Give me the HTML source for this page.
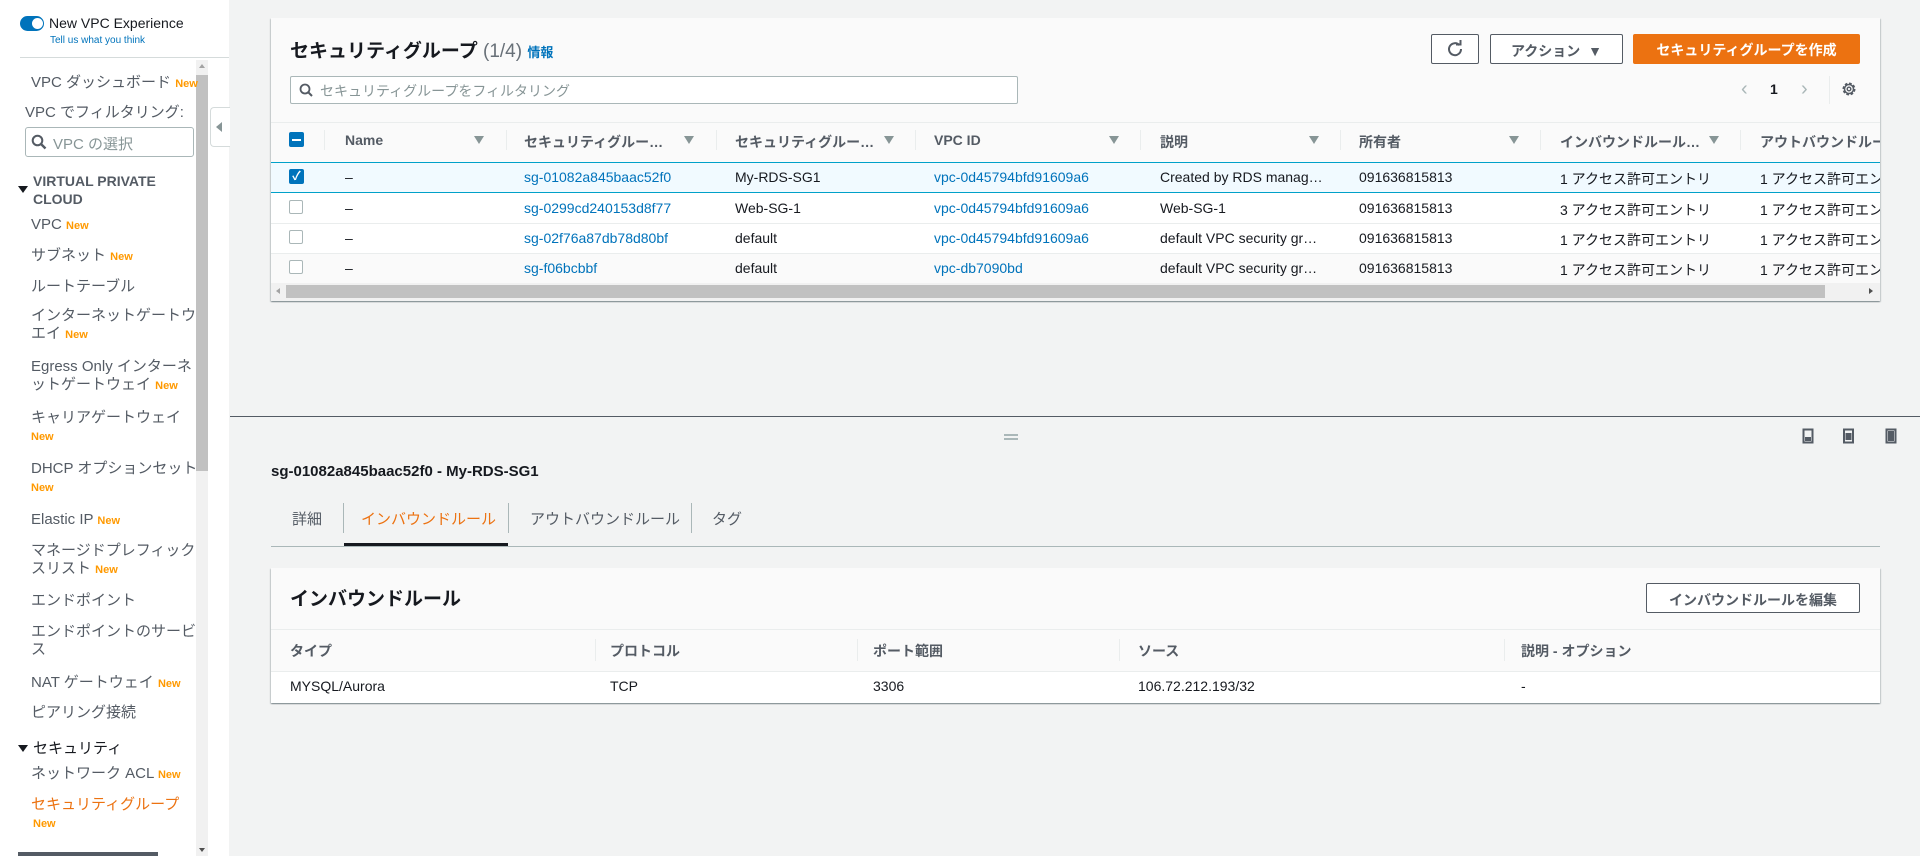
<!DOCTYPE html>
<html><head><meta charset="utf-8"><style>
*{margin:0;padding:0;box-sizing:border-box}
body{width:1920px;height:856px;overflow:hidden;background:#f2f3f3;font-family:"Liberation Sans","Noto Sans CJK JP",sans-serif;position:relative;color:#16191f}
.a{position:absolute;white-space:nowrap}
.sb{position:absolute;left:0;top:0;width:229px;height:856px;background:#fff}
.si{position:absolute;left:31px;font-size:15px;color:#545b64;white-space:nowrap;line-height:18px}
.n{color:#ff9900;font-weight:bold;font-size:11px}
.hd{position:absolute;left:31px;font-size:14px;font-weight:bold;color:#545b64;line-height:18px}
.panel{position:absolute;background:#fafafa;box-shadow:0 1px 1px rgba(0,28,36,.3),1px 1px 1px rgba(0,28,36,.15),-1px 1px 1px rgba(0,28,36,.15)}
.th{font-size:14px;font-weight:bold;color:#545b64}
.td{font-size:14px;color:#16191f}
.lk{color:#0073bb}
.vd{position:absolute;width:1px;background:#eaeded}
.fi{position:absolute;width:0;height:0;border-left:5px solid transparent;border-right:5px solid transparent;border-top:8px solid #879596}
.cb{position:absolute;width:14px;height:14px;border:1px solid #aab7b8;border-radius:2px;background:#fff}
.tab{position:absolute;top:508px;font-size:15px;color:#545b64;white-space:nowrap}
</style></head><body>
<div class="sb">
 <div class="a" style="left:20px;top:16px;width:24px;height:15px;border-radius:8px;background:#0073bb"></div>
 <div class="a" style="left:32px;top:18px;width:11px;height:11px;border-radius:50%;background:#fff"></div>
 <div class="a" style="left:49px;top:15px;font-size:14px;color:#16191f">New VPC Experience</div>
 <div class="a" style="left:50px;top:35px;font-size:10px;color:#0073bb">Tell us what you think</div>
 <div class="a" style="left:20px;top:57px;width:209px;height:1px;background:#d5dbdb"></div>
 <div class="a" style="left:196px;top:60px;width:12px;height:796px;background:#f1f1f1"></div>
 <div class="a" style="left:196px;top:75px;width:12px;height:396px;background:#c1c1c1"></div>
 <div class="a" style="left:199px;top:64px;border-left:3px solid transparent;border-right:3px solid transparent;border-bottom:4px solid #a3a3a3"></div>
 <div class="a" style="left:199px;top:848px;border-left:3px solid transparent;border-right:3px solid transparent;border-top:4px solid #505050"></div>
 <div class="si" style="top:74px">VPC ダッシュボード <span class="n">New</span></div>
 <div class="si" style="left:25px;top:104px">VPC でフィルタリング:</div>
 <div class="a" style="left:25px;top:127px;width:169px;height:30px;border:1px solid #aab7b8;border-radius:3px"></div>
 <svg class="a" style="left:31px;top:134px" width="16" height="16" viewBox="0 0 16 16"><circle cx="6.5" cy="6.5" r="4.8" fill="none" stroke="#545b64" stroke-width="2"/><path d="M10 10l4.5 4.5" stroke="#545b64" stroke-width="2.4"/></svg>
 <div class="a" style="left:53px;top:133px;font-size:15px;color:#879596">VPC の選択</div>
 <div class="a" style="left:18px;top:186px;border-left:5px solid transparent;border-right:5px solid transparent;border-top:7px solid #16191f"></div>
 <div class="hd" style="left:33px;top:172px">VIRTUAL PRIVATE<br>CLOUD</div>
 <div class="si" style="top:216px">VPC <span class="n">New</span></div>
 <div class="si" style="top:247px">サブネット <span class="n">New</span></div>
 <div class="si" style="top:278px">ルートテーブル</div>
 <div class="si" style="top:307px">インターネットゲートウ<br>エイ <span class="n">New</span></div>
 <div class="si" style="top:358px">Egress Only インターネ<br>ットゲートウェイ <span class="n">New</span></div>
 <div class="si" style="top:409px">キャリアゲートウェイ<br><span class="n">New</span></div>
 <div class="si" style="top:460px">DHCP オプションセット<br><span class="n">New</span></div>
 <div class="si" style="top:511px">Elastic IP <span class="n">New</span></div>
 <div class="si" style="top:542px">マネージドプレフィック<br>スリスト <span class="n">New</span></div>
 <div class="si" style="top:592px">エンドポイント</div>
 <div class="si" style="top:623px">エンドポイントのサービ<br>ス</div>
 <div class="si" style="top:674px">NAT ゲートウェイ <span class="n">New</span></div>
 <div class="si" style="top:704px">ピアリング接続</div>
 <div class="a" style="left:18px;top:745px;border-left:5px solid transparent;border-right:5px solid transparent;border-top:7px solid #16191f"></div>
 <div class="a" style="left:33px;top:737px;font-size:15px;color:#16191f">セキュリティ</div>
 <div class="si" style="top:765px">ネットワーク ACL <span class="n">New</span></div>
 <div class="si" style="top:796px;color:#ec7211">セキュリティグループ<br><span class="n" style="margin-left:2px">New</span></div>
 <div class="a" style="left:18px;top:852px;width:140px;height:4px;background:#545b64"></div>
</div>
<div class="a" style="left:210px;top:107px;width:20px;height:40px;background:#fff;border:1px solid #d5dbdb;border-right:none;border-radius:4px 0 0 4px"></div>
<div class="a" style="left:216px;top:122px;border-top:5px solid transparent;border-bottom:5px solid transparent;border-right:6px solid #879596"></div>

<div class="panel" style="left:271px;top:18px;width:1609px;height:283px;overflow:hidden">
 <div class="a" style="left:19px;top:18px;font-size:19px;font-weight:bold">セキュリティグループ <span style="font-weight:normal;color:#687078">(1/4)</span> <span style="font-size:13px;color:#0073bb;font-weight:bold">情報</span></div>
 <div class="a" style="left:1160px;top:16px;width:48px;height:30px;border:1px solid #545b64;border-radius:2px;background:#fff"></div>
 <svg class="a" style="left:1175px;top:22px" width="18" height="18" viewBox="0 0 18 18"><path d="M13.5 5.2A6 6 0 1 0 15 9" fill="none" stroke="#545b64" stroke-width="2"/><path d="M10 4.5h4.5V0" fill="none" stroke="#545b64" stroke-width="2"/></svg>
 <div class="a" style="left:1219px;top:16px;width:133px;height:30px;border:1px solid #545b64;border-radius:2px;background:#fff;font-size:14px;font-weight:bold;color:#545b64;padding:6px 0 0 20px">アクション&nbsp;&nbsp;▼</div>
 <div class="a" style="left:1362px;top:16px;width:227px;height:30px;border-radius:2px;background:#ec7211;font-size:14px;font-weight:bold;color:#fff;text-align:center;padding-top:6px">セキュリティグループを作成</div>
 <div class="a" style="left:19px;top:58px;width:728px;height:28px;border:1px solid #aab7b8;border-radius:2px;background:#fff"></div>
 <svg class="a" style="left:28px;top:65px" width="15" height="15" viewBox="0 0 15 15"><circle cx="6" cy="6" r="4.5" fill="none" stroke="#545b64" stroke-width="1.8"/><path d="M9.5 9.5L13 13" stroke="#545b64" stroke-width="2"/></svg>
 <div class="a" style="left:49px;top:63px;font-size:14px;color:#879596">セキュリティグループをフィルタリング</div>
 <div class="a" style="left:1470px;top:60px;font-size:20px;color:#aab7b8">‹</div>
 <div class="a" style="left:1499px;top:63px;font-size:14px;font-weight:bold;color:#16191f">1</div>
 <div class="a" style="left:1530px;top:60px;font-size:20px;color:#aab7b8">›</div>
 <div class="vd" style="left:1558px;top:58px;height:28px"></div>
 <svg class="a" style="left:1570px;top:63px" width="16" height="16" viewBox="0 0 16 16"><circle cx="8" cy="8" r="5.5" fill="none" stroke="#545b64" stroke-width="2" stroke-dasharray="2.6 1.7"/><circle cx="8" cy="8" r="4.5" fill="none" stroke="#545b64" stroke-width="1.5"/><circle cx="8" cy="8" r="1.8" fill="none" stroke="#545b64" stroke-width="1.4"/></svg>
 <div class="a" style="left:0;top:104px;width:1609px;height:1px;background:#eaeded"></div>
 <div class="a" style="left:18px;top:114px;width:15px;height:15px;background:#0073bb;border-radius:2px"></div>
 <div class="a" style="left:21px;top:121px;width:9px;height:2px;background:#fff"></div>
 <div class="vd" style="left:53px;top:112px;height:20px"></div>
 <div class="a th" style="left:74px;top:114px">Name</div><div class="fi" style="left:203px;top:118px"></div>
 <div class="vd" style="left:235px;top:112px;height:20px"></div>
 <div class="a th" style="left:253px;top:114px">セキュリティグルー…</div><div class="fi" style="left:413px;top:118px"></div>
 <div class="vd" style="left:445px;top:112px;height:20px"></div>
 <div class="a th" style="left:464px;top:114px">セキュリティグルー…</div><div class="fi" style="left:613px;top:118px"></div>
 <div class="vd" style="left:644px;top:112px;height:20px"></div>
 <div class="a th" style="left:663px;top:114px">VPC ID</div><div class="fi" style="left:838px;top:118px"></div>
 <div class="vd" style="left:869px;top:112px;height:20px"></div>
 <div class="a th" style="left:889px;top:114px">説明</div><div class="fi" style="left:1038px;top:118px"></div>
 <div class="vd" style="left:1069px;top:112px;height:20px"></div>
 <div class="a th" style="left:1088px;top:114px">所有者</div><div class="fi" style="left:1238px;top:118px"></div>
 <div class="vd" style="left:1269px;top:112px;height:20px"></div>
 <div class="a th" style="left:1289px;top:114px">インバウンドルール…</div><div class="fi" style="left:1438px;top:118px"></div>
 <div class="vd" style="left:1469px;top:112px;height:20px"></div>
 <div class="a th" style="left:1489px;top:114px">アウトバウンドルール</div>
 <div class="a" style="left:0;top:144px;width:1609px;height:31px;background:#f1faff;border-top:1px solid #00a1c9;border-bottom:1px solid #00a1c9"></div>
 <div class="a" style="left:0;top:205px;width:1609px;height:1px;background:#eaeded"></div>
 <div class="a" style="left:0;top:235px;width:1609px;height:1px;background:#eaeded"></div>
 <div class="a" style="left:0;top:175px;width:1609px;height:30px;background:#fff"></div>
 <div class="a" style="left:0;top:206px;width:1609px;height:29px;background:#fff"></div>
 <div class="a" style="left:18px;top:151px;width:15px;height:15px;background:#0073bb;border-radius:2px;color:#fff;font-size:12px;font-weight:bold;text-align:center;line-height:15px">✓</div>
 <div class="cb" style="left:18px;top:182px"></div>
 <div class="cb" style="left:18px;top:212px"></div>
 <div class="cb" style="left:18px;top:242px"></div>
 <div class="a td" style="left:74px;top:151px">–</div>
 <div class="a td lk" style="left:253px;top:151px">sg-01082a845baac52f0</div>
 <div class="a td" style="left:464px;top:151px">My-RDS-SG1</div>
 <div class="a td lk" style="left:663px;top:151px">vpc-0d45794bfd91609a6</div>
 <div class="a td" style="left:889px;top:151px">Created by RDS manag…</div>
 <div class="a td" style="left:1088px;top:151px">091636815813</div>
 <div class="a td" style="left:1289px;top:151px">1 アクセス許可エントリ</div>
 <div class="a td" style="left:1489px;top:151px">1 アクセス許可エン</div>
 <div class="a td" style="left:74px;top:182px">–</div>
 <div class="a td lk" style="left:253px;top:182px">sg-0299cd240153d8f77</div>
 <div class="a td" style="left:464px;top:182px">Web-SG-1</div>
 <div class="a td lk" style="left:663px;top:182px">vpc-0d45794bfd91609a6</div>
 <div class="a td" style="left:889px;top:182px">Web-SG-1</div>
 <div class="a td" style="left:1088px;top:182px">091636815813</div>
 <div class="a td" style="left:1289px;top:182px">3 アクセス許可エントリ</div>
 <div class="a td" style="left:1489px;top:182px">1 アクセス許可エン</div>
 <div class="a td" style="left:74px;top:212px">–</div>
 <div class="a td lk" style="left:253px;top:212px">sg-02f76a87db78d80bf</div>
 <div class="a td" style="left:464px;top:212px">default</div>
 <div class="a td lk" style="left:663px;top:212px">vpc-0d45794bfd91609a6</div>
 <div class="a td" style="left:889px;top:212px">default VPC security gr…</div>
 <div class="a td" style="left:1088px;top:212px">091636815813</div>
 <div class="a td" style="left:1289px;top:212px">1 アクセス許可エントリ</div>
 <div class="a td" style="left:1489px;top:212px">1 アクセス許可エン</div>
 <div class="a td" style="left:74px;top:242px">–</div>
 <div class="a td lk" style="left:253px;top:242px">sg-f06bcbbf</div>
 <div class="a td" style="left:464px;top:242px">default</div>
 <div class="a td lk" style="left:663px;top:242px">vpc-db7090bd</div>
 <div class="a td" style="left:889px;top:242px">default VPC security gr…</div>
 <div class="a td" style="left:1088px;top:242px">091636815813</div>
 <div class="a td" style="left:1289px;top:242px">1 アクセス許可エントリ</div>
 <div class="a td" style="left:1489px;top:242px">1 アクセス許可エン</div>
 <div class="a" style="left:0;top:265px;width:1609px;height:18px;background:#f1f1f1"></div>
 <div class="a" style="left:15px;top:267px;width:1539px;height:13px;background:#c1c1c1"></div>
 <div class="a" style="left:5px;top:270px;border-top:3px solid transparent;border-bottom:3px solid transparent;border-right:4px solid #a3a3a3"></div>
 <div class="a" style="left:1598px;top:270px;border-top:3px solid transparent;border-bottom:3px solid transparent;border-left:4px solid #505050"></div>
</div>

<div class="a" style="left:230px;top:416px;width:1690px;height:1px;background:#545b64"></div>
<div class="a" style="left:1004px;top:434px;width:14px;height:2px;background:#aab7b8"></div>
<div class="a" style="left:1004px;top:438px;width:14px;height:2px;background:#aab7b8"></div>
<svg class="a" style="left:1802px;top:428px" width="100" height="18" viewBox="0 0 100 18"><rect x="1.5" y="1.5" width="9" height="13" fill="none" stroke="#545b64" stroke-width="2"/><rect x="3" y="9" width="6" height="4" fill="#545b64"/><rect x="42" y="1.5" width="9" height="13" fill="none" stroke="#545b64" stroke-width="2"/><rect x="43.5" y="5" width="6" height="7" fill="#545b64"/><rect x="84.5" y="1.5" width="9" height="13" fill="none" stroke="#545b64" stroke-width="2"/><rect x="86" y="3" width="6" height="10" fill="#545b64"/></svg>

<div class="a" style="left:271px;top:463px;font-size:15px;font-weight:bold">sg-01082a845baac52f0 - My-RDS-SG1</div>
<div class="tab" style="left:292px">詳細</div>
<div class="vd" style="left:343px;top:503px;height:30px;background:#aab7b8"></div>
<div class="tab" style="left:361px;color:#ec7211">インバウンドルール</div>
<div class="vd" style="left:508px;top:503px;height:30px;background:#aab7b8"></div>
<div class="tab" style="left:530px">アウトバウンドルール</div>
<div class="vd" style="left:691px;top:503px;height:30px;background:#aab7b8"></div>
<div class="tab" style="left:712px">タグ</div>
<div class="a" style="left:271px;top:546px;width:1609px;height:1px;background:#aab7b8"></div>
<div class="a" style="left:344px;top:543px;width:164px;height:3px;background:#16191f"></div>

<div class="panel" style="left:271px;top:568px;width:1609px;height:135px">
 <div class="a" style="left:19px;top:16px;font-size:19px;font-weight:bold">インバウンドルール</div>
 <div class="a" style="left:1375px;top:15px;width:214px;height:30px;border:1px solid #545b64;border-radius:2px;background:#fff;font-size:14px;font-weight:bold;color:#545b64;text-align:center;padding-top:6px">インバウンドルールを編集</div>
 <div class="a" style="left:0;top:61px;width:1609px;height:1px;background:#eaeded"></div>
 <div class="a" style="left:0;top:103px;width:1609px;height:32px;background:#fff;border-top:1px solid #eaeded"></div>
 <div class="a th" style="left:19px;top:73px">タイプ</div>
 <div class="vd" style="left:324px;top:71px;height:22px"></div>
 <div class="a th" style="left:339px;top:73px">プロトコル</div>
 <div class="vd" style="left:586px;top:71px;height:22px"></div>
 <div class="a th" style="left:602px;top:73px">ポート範囲</div>
 <div class="vd" style="left:848px;top:71px;height:22px"></div>
 <div class="a th" style="left:867px;top:73px">ソース</div>
 <div class="vd" style="left:1233px;top:71px;height:22px"></div>
 <div class="a th" style="left:1250px;top:73px">説明 - オプション</div>
 <div class="a td" style="left:19px;top:110px">MYSQL/Aurora</div>
 <div class="a td" style="left:339px;top:110px">TCP</div>
 <div class="a td" style="left:602px;top:110px">3306</div>
 <div class="a td" style="left:867px;top:110px">106.72.212.193/32</div>
 <div class="a td" style="left:1250px;top:110px">-</div>
</div>
</body></html>
